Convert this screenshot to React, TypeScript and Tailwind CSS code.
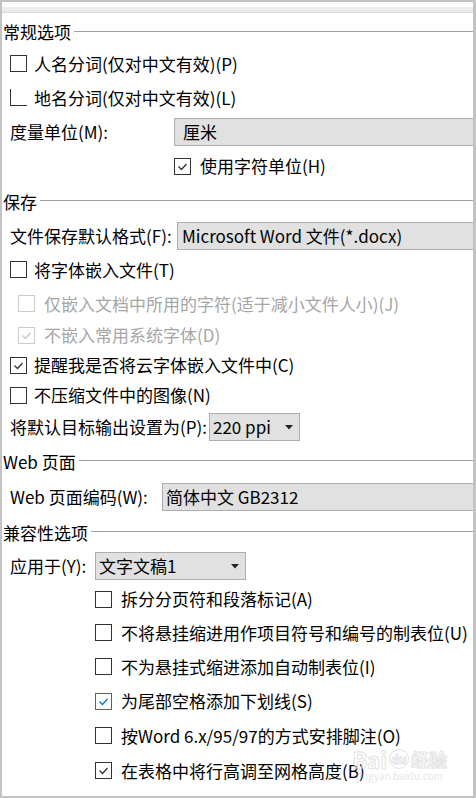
import type { ReactNode } from "react";

const FONT = { fontFamily: '"Noto Sans CJK SC", "Noto Sans", sans-serif' };

function Box({
  checked = false,
  tone = "normal",
  partial = false,
}: {
  checked?: boolean;
  tone?: "normal" | "disabled" | "blue";
  partial?: boolean;
}) {
  const border =
    tone === "disabled"
      ? "border-[#cccccc]"
      : tone === "blue"
      ? "border-[#0078d7]"
      : "border-[#333333]";
  const stroke =
    tone === "disabled" ? "#c8c8c8" : tone === "blue" ? "#0078d7" : "#333333";
  return (
    <div
      className={`w-[17px] h-[17px] shrink-0 flex items-center justify-center bg-white ${border} ${
        partial ? "border-l border-b" : "border"
      }`}
    >
      {checked && (
        <svg width="13" height="13" viewBox="0 0 13 13">
          <polyline
            points="2.5,6.5 5.5,9.5 10.5,4"
            fill="none"
            stroke={stroke}
            strokeWidth="1.3"
          />
        </svg>
      )}
    </div>
  );
}

function Row({ h, className = "", children }: { h: string; className?: string; children: ReactNode }) {
  return <div className={`flex items-center ${h} ${className}`}>{children}</div>;
}

function Heading({ h, text }: { h: string; text: string }) {
  return (
    <Row h={h} className="pl-[1px]">
      <span className="text-black">{text}</span>
      <div className="flex-1 h-px bg-[#a0a0a0] ml-[3px] -mt-[2px]" />
    </Row>
  );
}

function Check({
  h,
  label,
  checked,
  tone,
  partial,
  className = "pl-2",
  gap = "gap-[7px]",
}: {
  h: string;
  label: string;
  checked?: boolean;
  tone?: "normal" | "disabled" | "blue";
  partial?: boolean;
  className?: string;
  gap?: string;
}) {
  return (
    <Row h={h} className={`${className} ${gap}`}>
      <Box checked={checked} tone={tone} partial={partial} />
      <span className={tone === "disabled" ? "text-[#a6a6a6]" : "text-black"}>{label}</span>
    </Row>
  );
}

function Arrow() {
  return (
    <svg width="8" height="5" viewBox="0 0 8 5" className="shrink-0">
      <polygon points="0,0 8,0 4,4.5" fill="#222" />
    </svg>
  );
}

export default function App() {
  return (
    <div
      className="w-[476px] h-[798px] bg-white border-2 border-r-[3px] border-[#c3c3c3] overflow-hidden relative text-[17px] leading-[20px]"
      style={FONT}
    >
      <div className="h-[5px]" />
      <div className="h-[6px] bg-[#ececec] border-b border-[#dadada]" />
      <div className="h-[4px]" />

      <Heading h="h-[30px]" text="常规选项" />
      <Check h="h-[33px]" label="人名分词(仅对中文有效)(P)" />
      <Check h="h-[35px]" label="地名分词(仅对中文有效)(L)" partial />
      <Row h="h-[34px]" className="pl-2">
        <span className="w-[164px]">度量单位(M):</span>
        <div className="flex-1 h-[28px] bg-[#e1e1e1] border-y border-l border-[#adadad] flex items-center pl-[8px]">
          厘米
        </div>
      </Row>
      <Check h="h-[34px]" label="使用字符单位(H)" checked className="pl-[172px]" gap="gap-[9px]" />

      <Heading h="h-[37px]" text="保存" />
      <Row h="h-[32px]" className="pl-2">
        <span className="w-[167px]">文件保存默认格式(F):</span>
        <div className="flex-1 h-[28px] bg-[#e1e1e1] border-y border-l border-[#adadad] flex items-center pl-[4px]">
          Microsoft Word 文件(*.docx)
        </div>
      </Row>
      <Check h="h-[35px]" label="将字体嵌入文件(T)" />
      <Check
        h="h-[33px]"
        label="仅嵌入文档中所用的字符(适于减小文件人小)(J)"
        tone="disabled"
        className="pl-4"
        gap="gap-[9px]"
      />
      <Check h="h-[30px]" label="不嵌入常用系统字体(D)" tone="disabled" checked className="pl-4" gap="gap-[9px]" />
      <Check h="h-[30px]" label="提醒我是否将云字体嵌入文件中(C)" checked />
      <Check h="h-[30px]" label="不压缩文件中的图像(N)" />
      <Row h="h-[34px]" className="pl-2">
        <span>将默认目标输出设置为(P):</span>
        <div className="ml-[2px] w-[91px] h-[28px] bg-[#e1e1e1] border border-[#adadad] flex items-center justify-between pl-[3px] pr-[6px]">
          <span>220 ppi</span>
          <Arrow />
        </div>
      </Row>

      <Heading h="h-[35px]" text="Web 页面" />
      <Row h="h-[36px]" className="pl-2">
        <span className="w-[152px]">Web 页面编码(W):</span>
        <div className="flex-1 h-[28px] bg-[#e1e1e1] border-y border-l border-[#adadad] flex items-center pl-[3px]">
          简体中文 GB2312
        </div>
      </Row>

      <Heading h="h-[35px]" text="兼容性选项" />
      <Row h="h-[32px]" className="pl-2">
        <span className="w-[85px]">应用于(Y):</span>
        <div className="w-[151px] h-[28px] bg-[#e1e1e1] border border-[#adadad] flex items-center justify-between pl-[3px] pr-[6px]">
          <span>文字文稿1</span>
          <Arrow />
        </div>
      </Row>
      <Check h="h-[34px]" label="拆分分页符和段落标记(A)" className="pl-[93px]" gap="gap-[9px]" />
      <Check
        h="h-[33px]"
        label="不将悬挂缩进用作项目符号和编号的制表位(U)"
        className="pl-[93px]"
        gap="gap-[9px]"
      />
      <Check h="h-[35px]" label="不为悬挂式缩进添加自动制表位(I)" className="pl-[93px]" gap="gap-[9px]" />
      <Check
        h="h-[34px]"
        label="为尾部空格添加下划线(S)"
        checked
        tone="blue"
        className="pl-[93px]"
        gap="gap-[9px]"
      />
      <Check h="h-[35px]" label="按Word 6.x/95/97的方式安排脚注(O)" className="pl-[93px]" gap="gap-[9px]" />
      <Check
        h="h-[35px]"
        label="在表格中将行高调至网格高度(B)"
        checked
        className="pl-[93px]"
        gap="gap-[9px]"
      />

      {/* watermark */}
      <div className="absolute right-[26px] bottom-[14px] flex flex-col items-center pointer-events-none opacity-60">
        <div className="flex items-center gap-[2px] text-[22px] leading-[22px] font-bold text-white [-webkit-text-stroke:1px_#d0d0d0]">
          <span>Bai</span>
          <span className="w-[20px] h-[20px] rounded-full border border-[#d0d0d0] text-[12px] leading-[18px] text-center">du</span>
          <span className="text-[18px]">经验</span>
        </div>
        <span className="text-[10px] leading-[12px] text-[#d8d8d8]">jingyan.baidu.com</span>
      </div>
    </div>
  );
}
